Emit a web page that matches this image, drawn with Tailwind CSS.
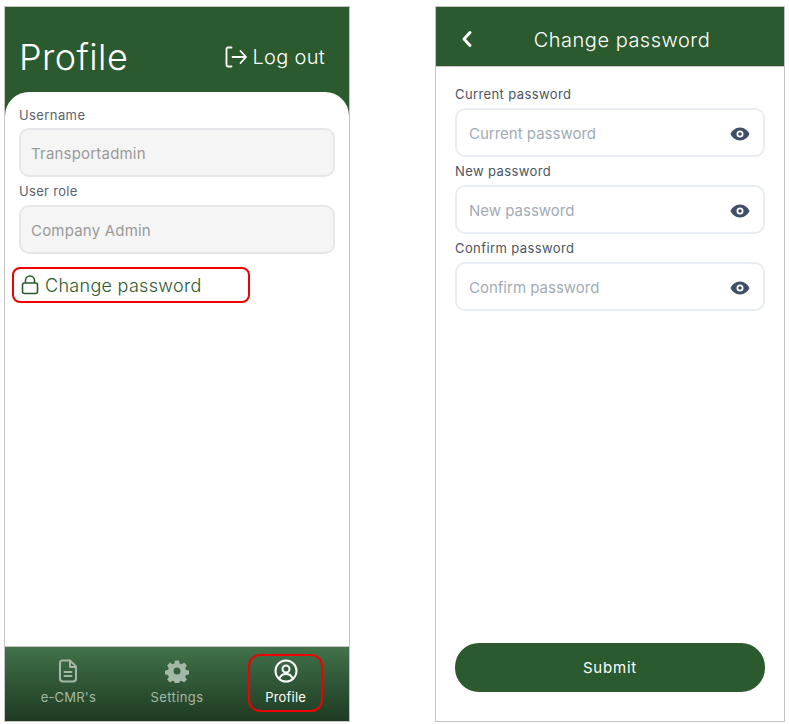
<!DOCTYPE html>
<html lang="en">
<head>
  <meta charset="UTF-8" />
  <title>Profile</title>
  <script src="https://cdn.jsdelivr.net/npm/@tailwindcss/browser@4"></script>
</head>
<body class="bg-white w-[789px] h-[724px] overflow-hidden font-['Inter','Noto_Sans',sans-serif]">
<div class="flex items-start pt-[6px] pl-[4px] gap-[85px]">

  <!-- profile screen -->
  <div class="w-[346px] h-[716px] border border-[#c4c4c4] bg-[#2b5a2f] flex flex-col">
    <div class="h-[85px] shrink-0 flex items-end justify-between pl-[14px] pr-[24px] pb-[15px] text-white">
      <h1 class="text-[36px] leading-[40px] font-light tracking-[0.4px]">Profile</h1>
      <button class="flex items-center gap-[4px] text-[20px] leading-[28px] font-light tracking-[0.3px] mb-[6px]">
        <svg class="w-[24px] h-[24px]" viewBox="0 0 24 24" fill="none" stroke="currentColor" stroke-width="1.8" stroke-linecap="round" stroke-linejoin="round">
          <path d="M7.500 2.500H4A1.500 1.500 0 0 0 2.500 4v16A1.500 1.500 0 0 0 4 21.500h3.500" />
          <path d="M8.500 12H22M16.500 6l5.500 6-5.500 6" />
        </svg>
        Log out
      </button>
    </div>

    <div class="flex-1 bg-white rounded-t-[24px] pt-[15px] px-[14px]">
      <label class="block text-[13px] leading-[16px] tracking-[0.4px] text-[#5b6370]">Username</label>
      <div class="mt-[5px] h-[49px] rounded-[10px] border-2 border-[#e5e7eb] bg-[#f5f5f5] flex items-center pt-[3px] px-[10px] text-[15px] tracking-[0.2px] text-[#9a9a9a]">Transportadmin</div>
      <label class="block mt-[6px] text-[13px] leading-[16px] tracking-[0.3px] text-[#5b6370]">User role</label>
      <div class="mt-[6px] h-[49px] rounded-[10px] border-2 border-[#e5e7eb] bg-[#f5f5f5] flex items-center pt-[3px] px-[10px] text-[15px] tracking-[0.2px] text-[#9a9a9a]">Company Admin</div>
      <button class="-ml-[7px] mt-[13px] w-[238px] h-[36px] rounded-[8px] border-2 border-[#f00000] flex items-center gap-[6px] pl-[7px] text-[18px] font-light tracking-[0.3px] text-[#2b5a2f]">
        <svg class="w-[18px] h-[20px]" viewBox="0 0 18 20" fill="none" stroke="currentColor" stroke-width="1.6" stroke-linejoin="round">
          <rect x="1.500" y="8" width="15" height="10.500" rx="2" />
          <path d="M4.500 8V5.500a4.500 4.500 0 0 1 9 0V8" />
        </svg>
        Change password
      </button>
    </div>

    <nav class="h-[75px] shrink-0 border-t border-[#c4c4c4] bg-gradient-to-b from-[#41724a] to-[#1e3b22] grid grid-cols-3 px-[9px] text-[13px]">
      <div class="flex flex-col items-center pt-[12px] text-[#a3b8a6]">
        <svg class="w-[24px] h-[24px]" viewBox="0 0 24 24" fill="none" stroke="currentColor" stroke-width="2" stroke-linejoin="round" stroke-linecap="round">
          <path d="M6 1.500h8l6 6V19.500a3 3 0 0 1-3 3H7a3 3 0 0 1-3-3V3.500a2 2 0 0 1 2-2z" />
          <path d="M14 1.500V8h6M8.500 13h7M8.500 17h7" />
        </svg>
        <span class="mt-[4px] leading-[20px] tracking-[0.2px]">e-CMR's</span>
      </div>
      <div class="flex flex-col items-center pt-[12px] text-[#a3b8a6]">
        <svg class="w-[24px] h-[24px]" viewBox="0 0 24 24" fill="currentColor">
          <path fill-rule="evenodd" d="M10 1.500h4l.6 3 1.900.8 2.600-1.700 2.800 2.800-1.700 2.600.8 1.900 3 .6v4l-3 .6-.8 1.900 1.700 2.600-2.800 2.800-2.600-1.700-1.900.8-.6 3h-4l-.6-3-1.900-.8-2.600 1.700-2.800-2.800 1.700-2.600-.8-1.900-3-.6v-4l3-.6.8-1.900L2.100 6.400l2.800-2.800 2.600 1.700 1.900-.8zM12 8.500a3.500 3.500 0 1 0 0 7 3.500 3.500 0 0 0 0-7z" />
        </svg>
        <span class="mt-[4px] leading-[20px] tracking-[0.4px]">Settings</span>
      </div>
      <div class="flex justify-center">
        <div class="mt-[7px] w-[75px] h-[58px] rounded-[12px] border-2 border-[#f00000] flex flex-col items-center pt-[3px] text-white">
          <svg class="w-[24px] h-[24px]" viewBox="0 0 24 24" fill="none" stroke="currentColor" stroke-width="2">
            <circle cx="12" cy="12" r="10.500" />
            <circle cx="12" cy="10" r="3.500" />
            <path d="M5.500 19.500c1-3 3.500-4.500 6.500-4.500s5.500 1.500 6.500 4.500" />
          </svg>
          <span class="mt-[4px] leading-[20px] tracking-[0.2px]">Profile</span>
        </div>
      </div>
    </nav>
  </div>

  <!-- change password screen -->
  <div class="w-[350px] h-[716px] border border-[#c4c4c4] bg-white flex flex-col">
    <div class="relative h-[60px] shrink-0 bg-[#2b5a2f] border-b border-[#c4c4c4] flex items-center justify-center pl-[24px] pt-[6px] text-white">
      <svg class="absolute left-[25px] top-[23px] w-[12px] h-[18px]" viewBox="0 0 12 18" fill="none" stroke="currentColor" stroke-width="3" stroke-linecap="round" stroke-linejoin="round">
        <path d="M9 2.500 3 9l6 6.500" />
      </svg>
      <h2 class="text-[20px] font-light tracking-[0.5px]">Change password</h2>
    </div>

    <div class="flex-1 px-[19px] pt-[19px] flex flex-col">
      <label class="block text-[13px] leading-[16px] tracking-[0.4px] text-[#4b5563]">Current password</label>
      <div class="mt-[6px] h-[49px] rounded-[10px] border-2 border-[#e8edf3] flex items-center justify-between pt-[3px] pl-[12px] pr-[13px] text-[15px] text-[#a3abb5]">
        Current password
        <svg class="w-[20px] h-[14px]" viewBox="0 0 20 14"><path fill="#3f4f68" fill-rule="evenodd" d="M10 .500C5.500.500 2 3.500.500 7 2 10.500 5.500 13.500 10 13.500s8-3 9.500-6.500C18 3.500 14.500.500 10 .500zm0 3a3.500 3.500 0 1 1 0 7 3.500 3.500 0 0 1 0-7z"/><circle cx="10" cy="7" r="1.800" fill="#3f4f68"/></svg>
      </div>
      <label class="block mt-[6px] text-[13px] leading-[16px] tracking-[0.4px] text-[#4b5563]">New password</label>
      <div class="mt-[6px] h-[49px] rounded-[10px] border-2 border-[#e8edf3] flex items-center justify-between pt-[3px] pl-[12px] pr-[13px] text-[15px] text-[#a3abb5]">
        New password
        <svg class="w-[20px] h-[14px]" viewBox="0 0 20 14"><path fill="#3f4f68" fill-rule="evenodd" d="M10 .500C5.500.500 2 3.500.500 7 2 10.500 5.500 13.500 10 13.500s8-3 9.500-6.500C18 3.500 14.500.500 10 .500zm0 3a3.500 3.500 0 1 1 0 7 3.500 3.500 0 0 1 0-7z"/><circle cx="10" cy="7" r="1.800" fill="#3f4f68"/></svg>
      </div>
      <label class="block mt-[6px] text-[13px] leading-[16px] tracking-[0.4px] text-[#4b5563]">Confirm password</label>
      <div class="mt-[6px] h-[49px] rounded-[10px] border-2 border-[#e8edf3] flex items-center justify-between pt-[3px] pl-[12px] pr-[13px] text-[15px] text-[#a3abb5]">
        Confirm password
        <svg class="w-[20px] h-[14px]" viewBox="0 0 20 14"><path fill="#3f4f68" fill-rule="evenodd" d="M10 .500C5.500.500 2 3.500.500 7 2 10.500 5.500 13.500 10 13.500s8-3 9.500-6.500C18 3.500 14.500.500 10 .500zm0 3a3.500 3.500 0 1 1 0 7 3.500 3.500 0 0 1 0-7z"/><circle cx="10" cy="7" r="1.800" fill="#3f4f68"/></svg>
      </div>
      <button class="mt-auto mb-[29px] h-[49px] pt-[2px] rounded-[24px] bg-[#2b5a2f] text-white text-[15px] font-normal tracking-[0.8px]">Submit</button>
    </div>
  </div>

</div>
</body>
</html>
